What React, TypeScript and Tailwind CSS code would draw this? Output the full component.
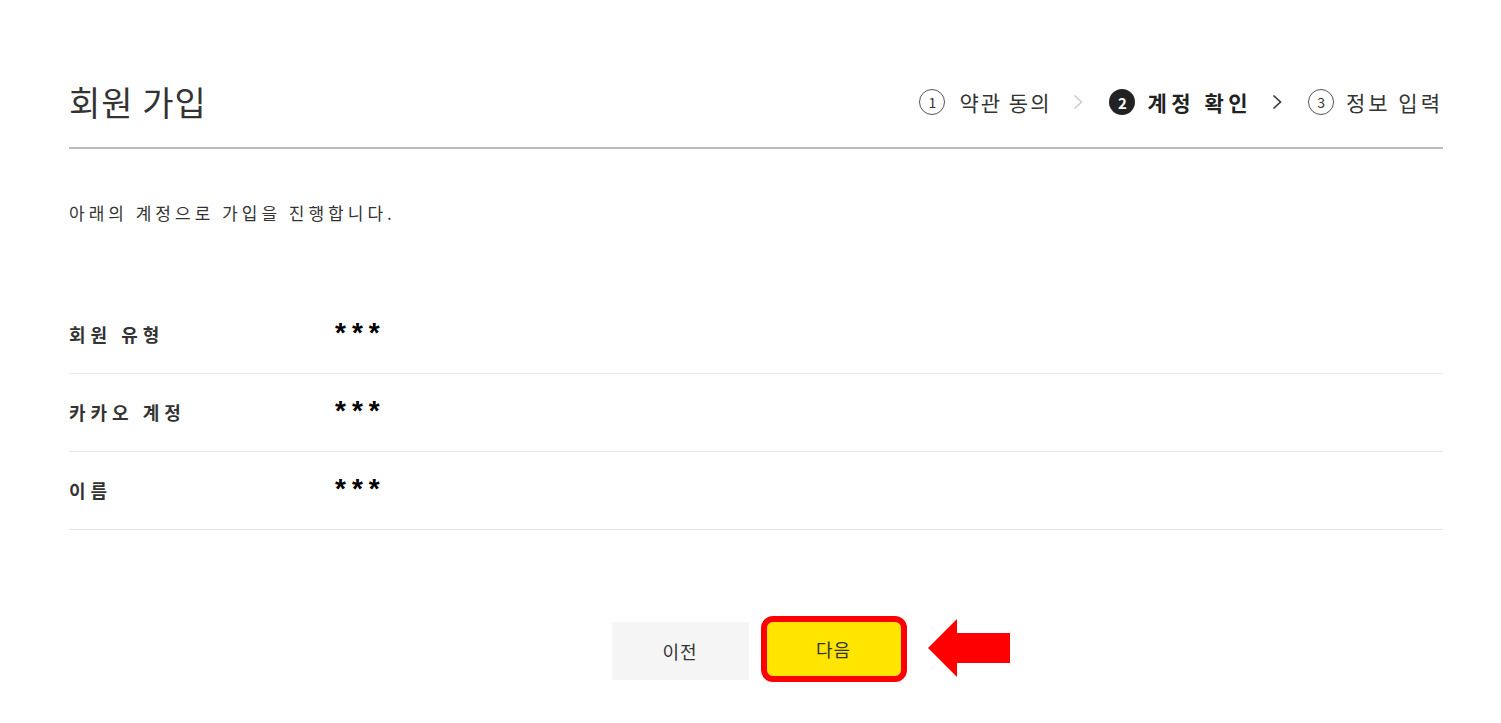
import React from "react";

const rows = [
  { label: "회원 유형", value: "***" },
  { label: "카카오 계정", value: "***" },
  { label: "이름", value: "***" },
];

function Chevron({ dark }: { dark?: boolean }) {
  return (
    <svg
      width="10"
      height="16"
      viewBox="0 0 10 16"
      className={dark ? "ml-[20px] mr-[26px]" : "ml-[22px] mr-[26px]"}
    >
      <polyline
        points="1.5,1.5 8.5,8 1.5,14.5"
        fill="none"
        stroke={dark ? "#333" : "#ccc"}
        strokeWidth="1.6"
      />
    </svg>
  );
}

function StepCircle({ n, active }: { n: number; active?: boolean }) {
  if (active) {
    return (
      <span className="flex h-[26px] w-[26px] items-center justify-center rounded-full bg-[#222] text-[15px] font-bold leading-none text-white">
        {n}
      </span>
    );
  }
  return (
    <span className="flex h-[26px] w-[26px] items-center justify-center rounded-full border-[1.5px] border-[#555] text-[14px] leading-none text-[#333]">
      {n}
    </span>
  );
}

export default function App() {
  return (
    <div className="min-h-[723px] bg-white font-['Noto_Sans_CJK_KR','Liberation_Sans',sans-serif] text-[#333]">
      <div className="ml-[69px] w-[1374px]">
        {/* header */}
        <div className="flex items-center justify-between border-b-2 border-[#bbb] pt-[80px] pb-[23px]">
          <h1 className="text-[34px] leading-[44px] font-normal tracking-[1px] text-[#333]">
            회원 가입
          </h1>
          <div className="flex items-center text-[21px] leading-none">
            <StepCircle n={1} />
            <span className="ml-[14px] tracking-[2px]">약관 동의</span>
            <Chevron />
            <StepCircle n={2} active />
            <span className="ml-[12px] font-bold tracking-[4.5px] text-[#222]">계정 확인</span>
            <Chevron dark />
            <StepCircle n={3} />
            <span className="ml-[12px] tracking-[3px]">정보 입력</span>
          </div>
        </div>

        <p className="mt-[52px] text-[17px] leading-[24px] tracking-[4px]">
          아래의 계정으로 가입을 진행합니다.
        </p>

        {/* account rows */}
        <div className="mt-[71px]">
          {rows.map((r) => (
            <div
              key={r.label}
              className="flex h-[78px] items-center border-b border-[#e6e6e6]"
            >
              <span className="w-[266px] text-[18px] font-bold tracking-[5px] text-[#333]">
                {r.label}
              </span>
              <span className="mb-[4px] font-['Liberation_Sans',sans-serif] text-[28px] font-bold tracking-[6px] text-black">
                {r.value}
              </span>
            </div>
          ))}
        </div>

        {/* buttons */}
        <div className="mt-[92px] flex items-start justify-center gap-[18px]">
          <button className="h-[58px] w-[137px] bg-[#f5f5f5] text-[18px] tracking-[1px] text-[#333]">
            이전
          </button>
          <div className="relative">
            <button className="h-[54px] w-[134px] rounded-[6px] bg-[#ffe500] text-[18px] tracking-[1px] text-[#333] outline-[6px] outline-solid outline-[#ff0000]">
              다음
            </button>
            <svg
              width="82"
              height="59"
              viewBox="0 0 82 59"
              className="absolute left-[161px] top-[-3px]"
            >
              <polygon
                points="0,29 29,0 29,14 82,14 82,44 29,44 29,58"
                fill="#ff0000"
              />
            </svg>
          </div>
        </div>
      </div>
    </div>
  );
}
